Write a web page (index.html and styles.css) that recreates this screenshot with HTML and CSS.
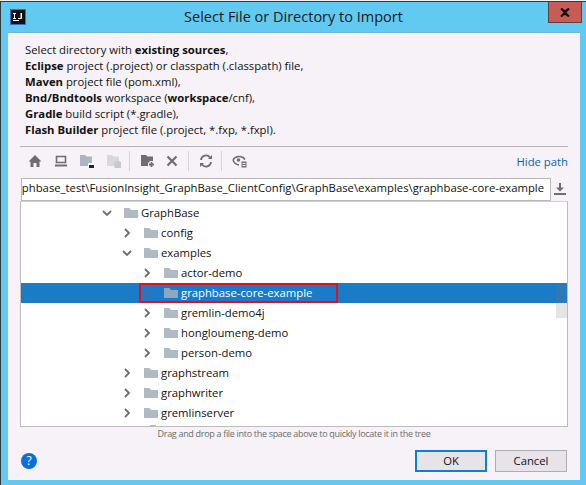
FILE: index.html
```html
<!DOCTYPE html>
<html lang="en">
<head>
<meta charset="utf-8">
<title>Select File or Directory to Import</title>
<link rel="stylesheet" href="styles.css">
</head>
<body>
<div class="window">
  <header class="titlebar">
    <svg class="app-icon" width="16" height="16" viewBox="0 0 16 16"><rect x="0.5" y="0.5" width="15" height="15" fill="#111" stroke="#3a6fc0"/><rect x="3" y="11" width="6" height="1" fill="#fff"/><path d="M3 4h3v1H5v4h1v1H3V9h1V5H3zM8 4h4v5c0 1-1 1-1 1H8V9h2.500V4H8z" fill="#fff"/></svg>
    <h1 class="title">Select File or Directory to Import</h1>
    <button class="close"><svg width="10" height="9" viewBox="0 0 10 9"><path d="M1 0.500L5 3.500L9 0.500M1 8.500L5 5.500L9 8.500M1 0.500L9 8.500M9 0.500L1 8.500" stroke="#111" stroke-width="2" fill="none"/></svg></button>
  </header>
  <main class="content">
    <div class="desc">
      <p>Select directory with <b>existing sources</b>,</p>
      <p><b>Eclipse</b> project (.project) or classpath (.classpath) file,</p>
      <p><b>Maven</b> project file (pom.xml),</p>
      <p><b>Bnd/Bndtools</b> workspace (<b>workspace</b>/cnf),</p>
      <p><b>Gradle</b> build script (*.gradle),</p>
      <p><b>Flash Builder</b> project file (.project, *.fxp, *.fxpl).</p>
    </div>
    <div class="toolbar">
      <svg class="tool t-home" width="14" height="14" viewBox="0 0 14 14"><path d="M7 1L0.500 7.500H2.500V13H5.500V9H8.500V13H11.500V7.500H13.500Z" fill="#6e6e6e"/></svg>
      <svg class="tool t-pc" width="14" height="14" viewBox="0 0 14 14"><path d="M2.500 2.500H11.500V8.500H2.500Z" fill="none" stroke="#6e6e6e" stroke-width="1.600"/><rect x="1" y="10.500" width="12" height="2" fill="#6e6e6e"/></svg>
      <svg class="tool t-f" width="16" height="16" viewBox="0 0 16 16"><path d="M1 2H6L7.500 3.500H13V13H1Z" fill="#a9b7c2"/><rect x="9" y="10" width="6" height="5" fill="#fff"/><rect x="10" y="12" width="5" height="3" fill="#222"/></svg>
      <svg class="tool t-f" width="16" height="16" viewBox="0 0 16 16"><path d="M1 2H6L7.500 3.500H13V13H1Z" fill="#d6d9da"/><rect x="8.500" y="8.500" width="6.500" height="6.500" fill="#c9c9c9"/></svg>
      <span class="sep s1"></span>
      <svg class="tool t-10" width="16" height="16" viewBox="0 0 16 16"><path d="M1 2H6L7.500 3.500H13V13H1Z" fill="#6e6e6e"/><path d="M11.500 8V15M8 11.500H15" stroke="#f6f2f7" stroke-width="4"/><path d="M11.500 9V14M9 11.500H14" stroke="#6e6e6e" stroke-width="1.800"/></svg>
      <svg class="tool t-10" width="12" height="12" viewBox="0 0 12 12"><path d="M1.500 1.500L10.500 10.500M10.500 1.500L1.500 10.500" stroke="#6e6e6e" stroke-width="2.200"/></svg>
      <span class="sep s2"></span>
      <svg class="tool t-10" width="14" height="14" viewBox="0 0 14 14"><path d="M2 6A5 5 0 0 1 11 3.500M12 8A5 5 0 0 1 3 10.500" fill="none" stroke="#6e6e6e" stroke-width="1.800"/><path d="M9 5H13V1ZM5 9H1V13Z" fill="#6e6e6e"/></svg>
      <span class="sep s3"></span>
      <svg class="tool t-10" width="16" height="16" viewBox="0 0 16 16"><path d="M1 7C3 3 10 2 13 6.500" fill="none" stroke="#6e6e6e" stroke-width="1.500"/><path d="M1 7C2 10 4 11.500 7 12" fill="none" stroke="#6e6e6e" stroke-width="1.500"/><circle cx="6.500" cy="7" r="1.800" fill="#6e6e6e"/><rect x="9" y="8" width="6" height="7" fill="#6e6e6e" stroke="#f6f2f7"/><path d="M10.500 10.500h3M10.500 12.500h3" stroke="#f6f2f7"/></svg>
      <a class="hide-path">Hide path</a>
    </div>
    <div class="path-row">
      <div class="path-input"><span>C:\graphbase_test\FusionInsight_GraphBase_ClientConfig\GraphBase\examples\graphbase-core-example</span></div>
      <svg class="download" width="12" height="12" viewBox="0 0 12 12"><path d="M6 0V6" stroke="#6e6e6e" stroke-width="2"/><path d="M2 4.500H10L6 8.500Z" fill="#6e6e6e"/><rect y="10" width="12" height="2" fill="#6e6e6e"/></svg>
    </div>
    <div class="tree">
      <div class="row d1"><svg class="arrow" width="10" height="10" viewBox="0 0 10 10"><path d="M1 3L5 7L9 3" fill="none" stroke="#6e6e6e" stroke-width="1.800"/></svg><svg class="folder" width="14" height="10" viewBox="0 0 14 10"><path d="M0 0H5.500L7 2H14V10H0Z" fill="#afbac5"/></svg><span>GraphBase</span></div>
      <div class="row d2"><svg class="arrow" width="10" height="10" viewBox="0 0 10 10"><path d="M3 1L7 5L3 9" fill="none" stroke="#6e6e6e" stroke-width="1.800"/></svg><svg class="folder" width="14" height="10" viewBox="0 0 14 10"><path d="M0 0H5.500L7 2H14V10H0Z" fill="#afbac5"/></svg><span>config</span></div>
      <div class="row d2"><svg class="arrow" width="10" height="10" viewBox="0 0 10 10"><path d="M1 3L5 7L9 3" fill="none" stroke="#6e6e6e" stroke-width="1.800"/></svg><svg class="folder" width="14" height="10" viewBox="0 0 14 10"><path d="M0 0H5.500L7 2H14V10H0Z" fill="#afbac5"/></svg><span>examples</span></div>
      <div class="row d3"><svg class="arrow" width="10" height="10" viewBox="0 0 10 10"><path d="M3 1L7 5L3 9" fill="none" stroke="#6e6e6e" stroke-width="1.800"/></svg><svg class="folder" width="14" height="10" viewBox="0 0 14 10"><path d="M0 0H5.500L7 2H14V10H0Z" fill="#afbac5"/></svg><span>actor-demo</span></div>
      <div class="row d3 selected"><svg class="arrow" width="10" height="10" viewBox="0 0 10 10"><path d="M3 1L7 5L3 9" fill="none" stroke="#4a6f8f" stroke-width="1.800"/></svg><svg class="folder" width="14" height="10" viewBox="0 0 14 10"><path d="M0 0H5.500L7 2H14V10H0Z" fill="#8fa6bb"/></svg><span>graphbase-core-example</span><i class="highlight"></i></div>
      <div class="row d3"><svg class="arrow" width="10" height="10" viewBox="0 0 10 10"><path d="M3 1L7 5L3 9" fill="none" stroke="#6e6e6e" stroke-width="1.800"/></svg><svg class="folder" width="14" height="10" viewBox="0 0 14 10"><path d="M0 0H5.500L7 2H14V10H0Z" fill="#afbac5"/></svg><span>gremlin-demo4j</span></div>
      <div class="row d3"><svg class="arrow" width="10" height="10" viewBox="0 0 10 10"><path d="M3 1L7 5L3 9" fill="none" stroke="#6e6e6e" stroke-width="1.800"/></svg><svg class="folder" width="14" height="10" viewBox="0 0 14 10"><path d="M0 0H5.500L7 2H14V10H0Z" fill="#afbac5"/></svg><span>hongloumeng-demo</span></div>
      <div class="row d3"><svg class="arrow" width="10" height="10" viewBox="0 0 10 10"><path d="M3 1L7 5L3 9" fill="none" stroke="#6e6e6e" stroke-width="1.800"/></svg><svg class="folder" width="14" height="10" viewBox="0 0 14 10"><path d="M0 0H5.500L7 2H14V10H0Z" fill="#afbac5"/></svg><span>person-demo</span></div>
      <div class="row d2"><svg class="arrow" width="10" height="10" viewBox="0 0 10 10"><path d="M3 1L7 5L3 9" fill="none" stroke="#6e6e6e" stroke-width="1.800"/></svg><svg class="folder" width="14" height="10" viewBox="0 0 14 10"><path d="M0 0H5.500L7 2H14V10H0Z" fill="#afbac5"/></svg><span>graphstream</span></div>
      <div class="row d2"><svg class="arrow" width="10" height="10" viewBox="0 0 10 10"><path d="M3 1L7 5L3 9" fill="none" stroke="#6e6e6e" stroke-width="1.800"/></svg><svg class="folder" width="14" height="10" viewBox="0 0 14 10"><path d="M0 0H5.500L7 2H14V10H0Z" fill="#afbac5"/></svg><span>graphwriter</span></div>
      <div class="row d2"><svg class="arrow" width="10" height="10" viewBox="0 0 10 10"><path d="M3 1L7 5L3 9" fill="none" stroke="#6e6e6e" stroke-width="1.800"/></svg><svg class="folder" width="14" height="10" viewBox="0 0 14 10"><path d="M0 0H5.500L7 2H14V10H0Z" fill="#afbac5"/></svg><span>gremlinserver</span></div>
      <div class="row peek"><svg class="folder" width="14" height="10" viewBox="0 0 14 10"><path d="M0 0H5.500L7 2H14V10H0Z" fill="#afbac5"/></svg></div>
      <div class="thumb"></div>
    </div>
    <div class="hint">Drag and drop a file into the space above to quickly locate it in the tree</div>
    <footer class="footer">
      <span class="help">?</span>
      <button class="btn ok">OK</button>
      <button class="btn">Cancel</button>
    </footer>
  </main>
</div>
</body>
</html>
```
FILE: styles.css
```css
* { box-sizing: border-box; }
html, body { margin: 0; padding: 0; }
body { width: 586px; height: 485px; overflow: hidden; background: #f2f2f2; font-family: "Open Sans", "Noto Sans", sans-serif; font-size: 11.3px; color: #111; }
.window { margin-top: 1px; height: 484px; background: #62c9f0; border-top: 1px solid #2f3b42; border-left: 1px solid #2f3b42; display: flex; flex-direction: column; }
.titlebar { height: 30px; flex: none; display: flex; align-items: flex-start; position: relative; }
.app-icon { margin: 7px 0 0 9px; flex: none; }
.title { position: absolute; left: 0; right: 0; top: 4px; margin: 0; text-align: center; font-weight: 400; font-size: 14.5px; line-height: 22px; color: #1a1a1a; }
.close { position: absolute; right: 4px; top: 0; width: 34px; height: 21px; padding: 0; border: 1px solid #6b3a36; border-top: 0; background: #c75b55; display: flex; align-items: center; justify-content: center; }
.content { margin: 0 6px 0 7px; flex: none; height: 448px; background: #f6f2f7; border-top: 1px solid #6fb6d6; padding: 0 12px; display: flex; flex-direction: column; }
.desc { height: 113px; padding: 9px 0 0 5px; }
.desc p { margin: 0; line-height: 16px; white-space: nowrap; }
.desc b { font-weight: 700; }
.toolbar { height: 31px; border-top: 1px solid #b4b0b6; padding-bottom: 2px; display: flex; align-items: center; }
.tool { flex: none; }
.t-home { margin-left: 8px; }
.t-pc { margin-left: 12px; }
.t-f { margin-left: 11px; }
.t-10 { margin-left: 10px; }
.sep { width: 1px; height: 20px; background: #d6d4d8; flex: none; }
.s1 { margin-left: 7px; }
.s2 { margin-left: 10px; }
.s3 { margin-left: 8px; }
.hide-path { margin-left: auto; color: #0b63b0; }
.path-row { height: 24px; display: flex; align-items: center; }
.path-input { width: 530px; margin-left: 1px; height: 23px; background: #fff; border: 1px solid #b9b9b9; overflow: hidden; display: flex; justify-content: flex-end; align-items: center; padding: 0 6px 3px 0; white-space: nowrap; }
.path-input span { flex: none; }
.download { margin-left: 3px; flex: none; }
.tree { position: relative; height: 226px; padding-top: 1px; background: #fff; border: 1px solid #bdbdbd; border-top-color: #d0d0d0; overflow: hidden; }
.row { height: 20px; display: flex; align-items: center; position: relative; white-space: nowrap; padding-bottom: 1px; }
.d1 { padding-left: 81px; }
.d2 { padding-left: 101px; }
.d3 { padding-left: 121px; }
.peek { padding-left: 129px; }
.peek .folder { margin-top: -5px; }
.arrow { flex: none; margin-right: 12px; }
.folder { flex: none; margin-right: 3px; }
.selected { background: #1a7bc6; color: #fff; }
.highlight { position: absolute; left: 118px; top: 0; width: 199px; height: 20px; border: 2px solid #e0101c; }
.thumb { position: absolute; right: 0; top: 82px; width: 11px; height: 34px; background: rgba(120, 120, 120, .2); }
.hint { height: 14px; line-height: 14px; font-size: 9px; letter-spacing: -0.31px; text-align: center; color: #6c6c6c; }
.footer { flex: 1; display: flex; align-items: flex-start; padding: 9px 1px 0 0; gap: 8px; }
.help { width: 16px; height: 16px; margin: 3px auto 0 1px; border-radius: 50%; background: #0a6fd8; color: #fff; font-size: 12px; line-height: 16px; text-align: center; }
.btn { width: 72px; height: 22px; padding: 0 0 1px; font: inherit; background: #e7e3e8; border: 1px solid #aeaeae; color: #111; }
.ok { border: 2px solid #0a7fdc; }
```
